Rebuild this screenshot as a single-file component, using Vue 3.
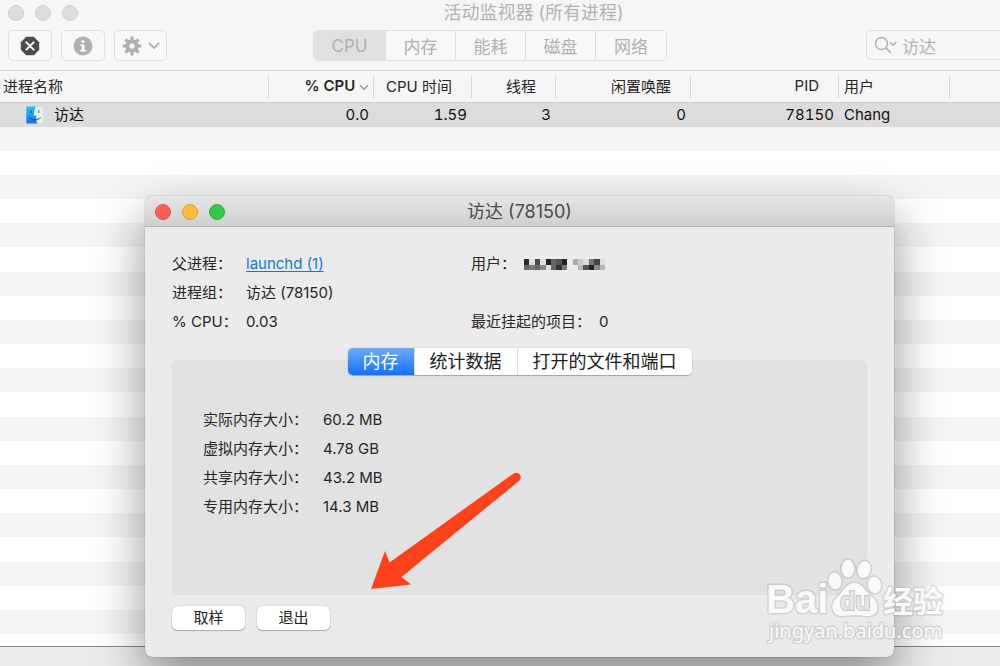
<template>
  <div class="desktop">
    <main class="monitor">
      <header class="toolbar">
        <div class="title-row">
          <i class="light"></i>
          <i class="light"></i>
          <i class="light"></i>
          <h1>活动监视器 (所有进程)</h1>
        </div>
        <div class="tools">
          <button class="tool" aria-label="停止进程">
            <svg width="20" height="20" viewBox="0 0 20 20">
              <path d="M6.2 0.8h7.6l5.4 5.4v7.6l-5.4 5.4H6.2L0.8 13.8V6.2z" fill="#4c4c4c" />
              <path d="M6.4 6.4l7.2 7.2M13.6 6.4l-7.2 7.2" stroke="#fff" stroke-width="2" stroke-linecap="round" />
            </svg>
          </button>
          <button class="tool" aria-label="进程信息">
            <svg width="20" height="20" viewBox="0 0 20 20">
              <circle cx="10" cy="10" r="9.4" fill="#b0b0b0" />
              <circle cx="10" cy="5.6" r="1.7" fill="#fff" />
              <path d="M7.3 8.4h4v5.4h1.6v1.6H7.3v-1.6h1.5v-3.8H7.3z" fill="#fff" />
            </svg>
          </button>
          <button class="tool gear" aria-label="操作">
            <svg width="20" height="20" viewBox="0 0 20 20">
              <g fill="#b0b0b0">
                <rect v-for="n in 4" :key="n" x="8.4" y="0.6" width="3.2" height="18.8" rx="0.8" :transform="`rotate(${n * 45} 10 10)`" />
                <circle cx="10" cy="10" r="6.8" />
              </g>
              <circle cx="10" cy="10" r="2.7" fill="#f6f6f6" />
            </svg>
            <svg width="12" height="8" viewBox="0 0 12 8">
              <path d="M1.5 1.5L6 6l4.5-4.5" fill="none" stroke="#b0b0b0" stroke-width="1.8" stroke-linecap="round" />
            </svg>
          </button>
          <nav class="segments">
            <button v-for="item in sections" :key="item" :class="{ on: item === 'CPU' }">{{ item }}</button>
          </nav>
          <label class="search">
            <svg width="24" height="18" viewBox="0 0 24 18">
              <circle cx="7.5" cy="7.5" r="6" fill="none" stroke="#b0b0b0" stroke-width="1.5" />
              <path d="M12 12l4.400 4.400" stroke="#b0b0b0" stroke-width="1.6" stroke-linecap="round" />
              <path d="M16.6 6.6l2.6 2.6 2.6-2.6" fill="none" stroke="#b0b0b0" stroke-width="1.5" stroke-linecap="round" />
            </svg>
            <input v-model="keyword" type="text" aria-label="搜索" />
          </label>
        </div>
      </header>

      <table class="processes">
        <colgroup>
          <col class="c-name" />
          <col class="c-cpu" />
          <col class="c-time" />
          <col class="c-threads" />
          <col class="c-wake" />
          <col class="c-pid" />
          <col class="c-user" />
          <col />
        </colgroup>
        <thead>
          <tr>
            <th class="left">进程名称</th>
            <th class="sorted">
              % CPU
              <svg width="10" height="7" viewBox="0 0 10 7">
                <path d="M1 1.2l4 4 4-4" fill="none" stroke="#999" stroke-width="1.4" />
              </svg>
            </th>
            <th class="wide">CPU 时间</th>
            <th class="wide">线程</th>
            <th class="wide">闲置唤醒</th>
            <th class="wide">PID</th>
            <th class="left">用户</th>
            <th></th>
          </tr>
        </thead>
        <tbody>
          <tr>
            <td class="left name">
              <svg width="18" height="18" viewBox="0 0 18 18">
                <defs>
                  <linearGradient id="face" x1="0" y1="0" x2="0" y2="1">
                    <stop offset="0" stop-color="#1fc8fb" />
                    <stop offset="1" stop-color="#1b6df0" />
                  </linearGradient>
                </defs>
                <rect x="0.3" y="0.5" width="17.4" height="17" rx="1.5" fill="#e8eff6" stroke="#c3ccd6" stroke-width="0.5" />
                <path d="M1.5 0.5h8.3C8.4 3.6 7.9 6.5 7.8 9.6h2.5c-.1 2.9.1 5.6.7 7.9H1.5C.8 17.5.3 17 .3 16.2V1.8C.3 1 .8.5 1.5.5z" fill="url(#face)" />
                <path d="M5.2 4.8v1.7M12.8 4.8v1.7M3.6 11.8c3.2 2.8 7.7 2.8 10.8 0" fill="none" stroke="#27364d" stroke-width="0.9" stroke-linecap="round" />
              </svg>
              访达
            </td>
            <td>0.0</td>
            <td>1.59</td>
            <td>3</td>
            <td>0</td>
            <td>78150</td>
            <td class="left">Chang</td>
            <td></td>
          </tr>
        </tbody>
      </table>
      <div class="stripes"></div>
      <footer class="status"></footer>
    </main>

    <section class="dialog" role="dialog" aria-labelledby="dialog-title">
      <header class="dialog-bar">
        <button class="light red" aria-label="关闭"></button>
        <button class="light yellow" aria-label="最小化"></button>
        <button class="light green" aria-label="缩放"></button>
        <h2 id="dialog-title">访达 (78150)</h2>
      </header>
      <div class="dialog-body">
        <div class="info">
          <dl class="summary">
            <dt>父进程：</dt>
            <dd><a href="#">launchd (1)</a></dd>
            <dt>进程组：</dt>
            <dd>访达 (78150)</dd>
            <dt>% CPU：</dt>
            <dd>0.03</dd>
          </dl>
          <dl class="owner">
            <div>
              <dt>用户：</dt>
              <dd>
                <svg class="mosaic" width="81" height="11" viewBox="0 0 15 2" preserveAspectRatio="none" shape-rendering="crispEdges">
                  <rect v-for="(c, i) in mosaic" :key="i" :x="i % 15" :y="Math.floor(i / 15)" width="1" height="1" :fill="c" />
                </svg>
              </dd>
            </div>
            <div>
              <dt>最近挂起的项目：</dt>
              <dd>0</dd>
            </div>
          </dl>
        </div>

        <div class="tabs" role="tablist">
          <button v-for="tab in tabs" :key="tab" role="tab" :class="{ on: tab === current }" @click="current = tab">{{ tab }}</button>
        </div>
        <div class="panel">
          <dl>
            <template v-for="row in memory" :key="row.label">
              <dt>{{ row.label }}：</dt>
              <dd>{{ row.value }}</dd>
            </template>
          </dl>
        </div>

        <div class="actions">
          <button>取样</button>
          <button>退出</button>
        </div>
      </div>
    </section>

    <svg class="arrow" width="154" height="120" viewBox="0 0 154 120">
      <path d="M1 119L15 81l4.5 11.5L143.5 3.5c5-3 9.5 2.5 6 7L31.5 107l9.5 7.5z" fill="#ff421c" />
    </svg>

    <svg class="watermark" width="190" height="94" viewBox="0 0 190 94">
      <g class="mark">
        <text class="bai" x="6" y="63">Bai</text>
        <text class="exp" x="123" y="62">经验</text>
        <text class="site" x="9" y="88">jingyan.baidu.com</text>
        <ellipse cx="75" cy="31" rx="6.5" ry="8.5" transform="rotate(-8 75 31)" />
        <ellipse cx="88" cy="18.5" rx="6.3" ry="9" />
        <ellipse cx="104" cy="19.5" rx="6.5" ry="8.5" transform="rotate(12 104 19.5)" />
        <ellipse cx="114.5" cy="35" rx="6.5" ry="8.3" transform="rotate(-10 114.5 35)" />
        <path d="M94.500 33c7 0 9.500 6 13.500 10s9.500 7.500 9.500 14c0 6.500-4.500 9-10 9-4.500 0-8-1-13-1s-8.500 1-13 1c-5.500 0-9-3.500-9-9 0-6.500 4.500-9.500 8.500-14S87.500 33 94.500 33z" />
      </g>
      <text class="du" x="80" y="60">du</text>
    </svg>
  </div>
</template>

<script setup>
import { ref } from 'vue'

const sections = ['CPU', '内存', '能耗', '磁盘', '网络']
const tabs = ['内存', '统计数据', '打开的文件和端口']
const current = ref('内存')
const keyword = ref('访达')

const memory = [
  { label: '实际内存大小', value: '60.2 MB' },
  { label: '虚拟内存大小', value: '4.78 GB' },
  { label: '共享内存大小', value: '43.2 MB' },
  { label: '专用内存大小', value: '14.3 MB' }
]

// 打码的用户名，两行色块
const mosaic = [
  '#2b2b2b', '#dedede', '#484848', '#dedede', '#222', '#666', '#555', '#222', 'none', '#aaa', '#ccc', '#dadada', '#777', '#444', '#ddd',
  '#666', '#777', '#666', '#888', '#ddd', '#666', '#333', '#777', 'none', 'none', '#bbb', '#555', '#222', '#888', '#b4b4b4'
]
</script>

<style>
body {
  margin: 0;
  overflow: hidden;
}
</style>

<style scoped>
* {
  box-sizing: border-box;
}

.desktop {
  position: relative;
  height: 100vh;
  overflow: hidden;
  font-family: Inter, "Noto Sans CJK SC", sans-serif;
  font-size: 15px;
  color: #262626;
}

button,
input {
  font-family: inherit;
  padding: 0;
  margin: 0;
}

h1,
h2 {
  margin: 0;
  font-size: 18px;
  line-height: 24px;
  font-weight: 400;
}

dl,
dd {
  margin: 0;
}

/* 主窗口右侧超出屏幕 */
.monitor {
  display: flex;
  flex-direction: column;
  height: 100%;
  margin-right: -67px;
  background: #fff;
}

.toolbar {
  height: 71px;
  background: #f6f6f6;
  border-bottom: 1px solid #d4d4d4;
}

.title-row {
  display: flex;
  align-items: center;
  gap: 11px;
  height: 25px;
  padding: 0 8px;
}

.light {
  flex: none;
  width: 16px;
  height: 16px;
  border-radius: 50%;
  background: #dcdcdc;
  border: 1px solid #d0d0d0;
}

.title-row h1 {
  flex: 1;
  margin-right: 81px;
  text-align: center;
  color: #b2b2b2;
}

.tools {
  display: flex;
  padding: 5px 8px 0;
}

.tool {
  display: flex;
  align-items: center;
  justify-content: center;
  flex: none;
  gap: 6px;
  width: 44px;
  height: 31px;
  margin-right: 9px;
  background: #f8f8f8;
  border: 1px solid #dedede;
  border-radius: 5px;
}

.tool.gear {
  width: 53px;
  margin-right: 0;
}

.segments {
  display: flex;
  flex: none;
  height: 31px;
  margin-left: 146px;
  border: 1px solid #dedede;
  border-radius: 5px;
  overflow: hidden;
}

.segments button {
  width: 70px;
  border: 0;
  border-right: 1px solid #dedede;
  background: #f8f8f8;
  font-size: 17px;
  color: #b0b0b0;
}

.segments button.on {
  width: 72px;
  background: #e0e0e0;
}

.segments button:last-child {
  border-right: 0;
}

.search {
  display: flex;
  align-items: center;
  flex: 1;
  min-width: 0;
  height: 30px;
  margin-left: 199px;
  padding-left: 7px;
  border: 1px solid #dedede;
  border-radius: 5px;
}

.search svg {
  flex: none;
}

.search input {
  flex: 1;
  min-width: 0;
  margin-left: 4px;
  border: 0;
  outline: 0;
  background: transparent;
  font-size: 17px;
  color: #b4b4b4;
}

.processes {
  width: 100%;
  table-layout: fixed;
  border-collapse: collapse;
}

.c-name {
  width: 269px;
}

.c-cpu {
  width: 105px;
}

.c-time {
  width: 98px;
}

.c-threads {
  width: 84px;
}

.c-wake {
  width: 135px;
}

.c-pid {
  width: 148px;
}

.c-user {
  width: 111px;
}

th,
td {
  padding: 0 5px;
  text-align: right;
  white-space: nowrap;
}

th {
  height: 31px;
  padding-bottom: 2px;
  font-size: 15px;
  font-weight: 400;
  background: #f6f6f6 linear-gradient(#d8d8d8, #d8d8d8) right center / 1px 23px no-repeat;
  border-bottom: 1px solid #ccc;
}

th:last-child {
  background: #f6f6f6;
}

th.wide {
  padding-right: 20px;
}

th.sorted {
  font-weight: 600;
}

th.left,
td.left {
  text-align: left;
}

th:first-child {
  padding-left: 3px;
}

td {
  height: 24px;
  line-height: 24px;
  color: #111;
  background: #dcdcdc;
  font-variant-numeric: tabular-nums;
}

td.name {
  padding-left: 26px;
}

td.name svg {
  margin-right: 6px;
  vertical-align: -4px;
}

.stripes {
  flex: 1;
  background: repeating-linear-gradient(
    #f3f5f5 0 24px, #fff 24px 48px,
    #f3f5f5 48px 72px, #fff 72px 96px,
    #f3f5f5 96px 120px, #fff 120px 145px
  );
}

.status {
  height: 20px;
  background: #ececec;
  border-top: 1px solid #868686;
}

.dialog {
  position: absolute;
  top: 196px;
  left: 145px;
  right: 106px;
  border-radius: 7px;
  background: #ebebeb;
  box-shadow: 0 0 1px rgba(0, 0, 0, 0.6), 0 22px 50px rgba(0, 0, 0, 0.42);
}

.dialog-bar {
  display: flex;
  align-items: center;
  gap: 11px;
  height: 31px;
  padding: 2px 10px 0;
  border-bottom: 1px solid #b4b4b4;
  border-radius: 7px 7px 0 0;
  background: linear-gradient(#e6e6e6, #cfcfcf);
}

.dialog-bar h2 {
  flex: 1;
  margin-right: 81px;
  text-align: center;
  color: #4a4a4a;
}

.light.red {
  background: #fc5f5a;
  border-color: #e0504b;
}

.light.yellow {
  background: #fdbc40;
  border-color: #dfa134;
}

.light.green {
  background: #34c84a;
  border-color: #2bae3c;
}

.dialog-body {
  padding: 22px 27px 27px;
}

.info {
  display: flex;
  line-height: 29px;
}

.summary {
  display: grid;
  grid-template-columns: 74px 1fr;
  width: 299px;
}

.summary a {
  color: #1a73e0;
  text-underline-offset: 2px;
}

.owner {
  display: flex;
  flex-direction: column;
  justify-content: space-between;
}

.owner div {
  display: flex;
  gap: 8px;
}

.mosaic {
  vertical-align: -1px;
}

.tabs {
  position: relative;
  display: flex;
  width: fit-content;
  height: 27px;
  margin: 12px auto -15px;
  border-radius: 5px;
  background: #fff;
  box-shadow: 0 0 1px rgba(0, 0, 0, 0.4), 0 1px 1px rgba(0, 0, 0, 0.25);
  overflow: hidden;
}

.tabs button {
  padding: 0 15px;
  border: 0;
  border-left: 1px solid #ddd;
  background: #fff;
  font-size: 18px;
  line-height: 27px;
  color: #222;
}

.tabs button:first-child {
  border-left: 0;
}

.tabs button.on {
  background: linear-gradient(#6cabfa, #1470fb);
  color: #fff;
}

.panel {
  min-height: 235px;
  padding: 44px 30px;
  border: 1px solid #dedede;
  border-radius: 5px;
  background: #e2e2e2;
}

.panel dl {
  display: grid;
  grid-template-columns: 120px 1fr;
  line-height: 29px;
}

.actions {
  display: flex;
  gap: 12px;
  margin-top: 11px;
}

.actions button {
  width: 73px;
  height: 24px;
  border: 0;
  border-radius: 5px;
  background: #fff;
  box-shadow: 0 0 1px rgba(0, 0, 0, 0.4), 0 1px 1px rgba(0, 0, 0, 0.25);
  font-size: 15px;
  line-height: 24px;
  color: #222;
}

.arrow {
  position: absolute;
  top: 470px;
  left: 370px;
}

.watermark {
  position: absolute;
  right: 50px;
  bottom: 22px;
}

.mark {
  fill: #fafafa;
  stroke: #909090;
  stroke-opacity: 0.28;
  stroke-width: 3px;
  stroke-linejoin: round;
  paint-order: stroke;
}

.bai {
  font: 700 40px "Liberation Sans", sans-serif;
}

.exp {
  font: 700 30px "Noto Sans CJK SC", sans-serif;
}

.site {
  font: 400 20px "Noto Sans", sans-serif;
}

.du {
  font: 700 25px "Liberation Sans", sans-serif;
  fill: #e6e6e6;
  stroke: #c6c6c6;
  stroke-width: 2px;
  paint-order: stroke;
}
</style>
